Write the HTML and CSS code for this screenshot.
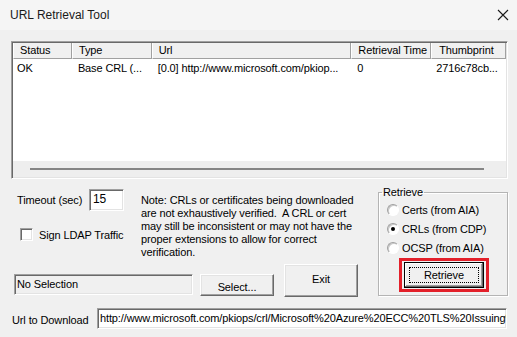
FILE: index.html
```html
<!DOCTYPE html>
<html lang="en">
<head>
    <meta charset="UTF-8">
    <title>URL Retrieval Tool</title>
    <link rel="stylesheet" href="styles.css">
</head>
<body>
<div class="window">
    <div class="titlebar">
        <span class="title">URL Retrieval Tool</span>
        <svg class="close" width="12" height="12" viewBox="0 0 12 12">
            <path d="M1 1 L11 11 M11 1 L1 11" stroke="#1a1a1a" stroke-width="1.1" fill="none"/>
        </svg>
    </div>

    <div class="content">
        <!-- results list -->
        <div class="listview">
            <div class="lv-row lv-head">
                <div class="c-status">Status</div>
                <div class="c-type">Type</div>
                <div class="c-url">Url</div>
                <div class="c-time">Retrieval Time</div>
                <div class="c-thumb">Thumbprint</div>
            </div>
            <div class="lv-row lv-item">
                <div class="c-status">OK</div>
                <div class="c-type">Base CRL (...</div>
                <div class="c-url">[0.0] http://www.microsoft.com/pkiop...</div>
                <div class="c-time">0</div>
                <div class="c-thumb">2716c78cb...</div>
            </div>
            <div class="lv-fill"></div>
            <div class="hscroll"><div class="thumb"></div></div>
        </div>

        <div class="lower">
            <div class="left">
                <div class="options">
                    <div class="opts">
                        <div class="timeout">
                            <span class="timeout-label">Timeout (sec)</span>
                            <div class="edit small">15</div>
                        </div>
                        <div class="check-row">
                            <span class="checkbox"></span>
                            <span>Sign LDAP Traffic</span>
                        </div>
                    </div>
                    <p class="note">Note: CRLs or certificates being downloaded<br>are not exhaustively verified.&nbsp; A CRL or cert<br>may still be inconsistent or may not have the<br>proper extensions to allow for correct<br>verification.</p>
                </div>
                <div class="actions">
                    <div class="edit readonly selection">No Selection</div>
                    <button class="btn select">Select...</button>
                    <button class="btn exit">Exit</button>
                </div>
            </div>

            <fieldset class="group">
                <legend>Retrieve</legend>
                <div class="radio-row"><span class="radio"></span>Certs (from AIA)</div>
                <div class="radio-row"><span class="radio checked"></span>CRLs (from CDP)</div>
                <div class="radio-row"><span class="radio"></span>OCSP (from AIA)</div>
                <div class="highlight">
                    <button class="btn default"><span class="focus">Retrieve</span></button>
                </div>
            </fieldset>
        </div>

        <div class="url-row">
            <span class="url-label">Url to Download</span>
            <div class="edit url">http://www.microsoft.com/pkiops/crl/Microsoft%20Azure%20ECC%20TLS%20Issuing%20CA%2001.crl</div>
        </div>
    </div>
</div>
</body>
</html>
```

FILE: styles.css
```css
html, body {
    margin: 0;
    padding: 0;
}
body {
    width: 517px;
    height: 337px;
    overflow: hidden;
    background: #f0f0f0;
    font-family: "Liberation Sans", Arial, sans-serif;
    font-size: 11px;
    letter-spacing: -0.12px;
    color: #000;
}
.window {
    width: 517px;
    height: 337px;
    background: #f0f0f0;
}
.titlebar {
    height: 30px;
    background: #f5f5f5;
    display: flex;
    align-items: center;
    padding: 0 8px 0 10px;
}
.title {
    font-size: 12px;
    letter-spacing: 0;
    color: #1a1a1a;
    flex: 1;
}
.content {
    padding: 11px 9px 0 11px;
}

/* list view */
.listview {
    width: 497px;
    height: 138px;
    box-sizing: border-box;
    border: 1px solid;
    border-color: #a0a0a0 #fff #fff #a0a0a0;
    box-shadow: inset 1px 1px 0 #696969, inset -1px -1px 0 #e3e3e3;
    background: #fff;
    padding: 1px;
    display: flex;
    flex-direction: column;
}
.lv-row {
    display: flex;
    white-space: nowrap;
}
.lv-row > div {
    overflow: hidden;
    box-sizing: border-box;
    padding-left: 6px;
}
.c-status { width: 59px; }
.c-type { width: 80px; }
.c-url { width: 200px; }
.c-time { width: 80px; }
.c-thumb { width: 75px; }
.lv-head {
    height: 16px;
    background: #f0f0f0;
}
.lv-head > div {
    line-height: 15px;
    border-left: 1px solid #fff;
    border-right: 1px solid #a0a0a0;
    border-bottom: 1px solid #a0a0a0;
}
.lv-head .c-status { padding-left: 6px; }
.lv-head .c-thumb { padding-left: 7px; }
.lv-item {
    height: 19px;
    line-height: 19px;
}
.lv-item .c-status { padding-left: 4px; }
.lv-item .c-thumb { padding-left: 5px; }
.lv-fill {
    flex: 1;
}
.hscroll {
    height: 16px;
    background: #eeeeee;
    display: flex;
    align-items: center;
    padding: 0 22px 0 17px;
}
.hscroll .thumb {
    flex: 1;
    height: 2px;
    background: #858585;
}

/* lower area */
.lower {
    display: flex;
}
.left {
    width: 367px;
}
.options {
    display: flex;
    margin-top: 10px;
}
.opts {
    width: 130px;
}
.timeout {
    display: flex;
    align-items: center;
}
.timeout-label {
    width: 72px;
    padding-left: 6px;
}
.edit {
    box-sizing: border-box;
    border: 1px solid;
    border-color: #a0a0a0 #fff #fff #a0a0a0;
    box-shadow: inset 1px 1px 0 #696969, inset -1px -1px 0 #e3e3e3;
    background: #fff;
    padding: 2px 3px;
    white-space: nowrap;
    overflow: hidden;
}
.edit.small {
    width: 35px;
    height: 22px;
    font-size: 12px;
    line-height: 15px;
}
.check-row {
    display: flex;
    align-items: center;
    margin-top: 17px;
    padding-left: 9px;
    white-space: nowrap;
}
.checkbox {
    width: 13px;
    height: 13px;
    box-sizing: border-box;
    border: 1px solid;
    border-color: #a0a0a0 #fff #fff #a0a0a0;
    box-shadow: inset 1px 1px 0 #696969, inset -1px -1px 0 #e3e3e3;
    background: #fff;
    margin-right: 6px;
}
.note {
    margin: 0;
    padding-top: 5px;
    line-height: 13px;
    white-space: nowrap;
}
.actions {
    display: flex;
    align-items: flex-start;
    margin-top: 5px;
}
.edit.readonly {
    background: #f0f0f0;
}
.selection {
    width: 179px;
    height: 21px;
    margin: 10px 0 0 3px;
    line-height: 15px;
    padding-left: 2px;
}
.btn {
    font-family: inherit;
    font-size: 11px;
    letter-spacing: -0.12px;
    color: #000;
    background: #f0f0f0;
    box-sizing: border-box;
    border: 1px solid;
    border-color: #fff #696969 #696969 #fff;
    box-shadow: inset -1px -1px 0 #a0a0a0, inset 1px 1px 0 #e3e3e3;
    padding: 0;
    margin: 0;
}
.select {
    width: 74px;
    height: 22px;
    margin: 10px 0 0 7px;
    padding-top: 3px;
}
.exit {
    width: 74px;
    height: 33px;
    margin-left: 10px;
    padding-bottom: 4px;
}

/* retrieve group */
.group {
    width: 130px;
    height: 110px;
    box-sizing: border-box;
    margin: 7px 0 0 0;
    padding: 1px 0 0 3px;
    border: 1px solid #b4b4b4;
    box-shadow: inset 1px 1px 0 #fff, 1px 1px 0 #fff;
    min-width: 0;
}
.group legend {
    padding: 0 1px;
    line-height: 13px;
}
.radio-row {
    display: flex;
    align-items: center;
    height: 19px;
    padding-left: 5px;
    white-space: nowrap;
}
.radio {
    width: 12px;
    height: 12px;
    box-sizing: border-box;
    border-radius: 50%;
    border: 1px solid;
    border-color: #a0a0a0 #fff #fff #a0a0a0;
    box-shadow: inset 1px 1px 0 #c8c8c8;
    background: #fff;
    margin-right: 3px;
    display: flex;
    align-items: center;
    justify-content: center;
}
.radio.checked::after {
    content: "";
    width: 4px;
    height: 4px;
    border-radius: 50%;
    background: #000;
}
.highlight {
    width: 90px;
    height: 34px;
    box-sizing: border-box;
    border: 3px solid #e3202a;
    padding: 1px 2px;
    margin: 1px 0 0 17px;
}
.btn.default {
    width: 80px;
    height: 26px;
    border-color: #000;
    box-shadow: inset -1px -1px 0 #696969, inset 1px 1px 0 #fff, inset -2px -2px 0 #a0a0a0;
    display: flex;
    padding: 4px;
}
.focus {
    flex: 1;
    border: 1px dotted #000;
    line-height: 14px;
}

/* url row */
.url-row {
    display: flex;
    align-items: center;
    margin-top: 11px;
}
.url-label {
    width: 85px;
    padding-left: 1px;
    padding-top: 3px;
    white-space: nowrap;
}
.edit.url {
    width: 410px;
    height: 21px;
    line-height: 15px;
    padding-left: 2px;
}
```
